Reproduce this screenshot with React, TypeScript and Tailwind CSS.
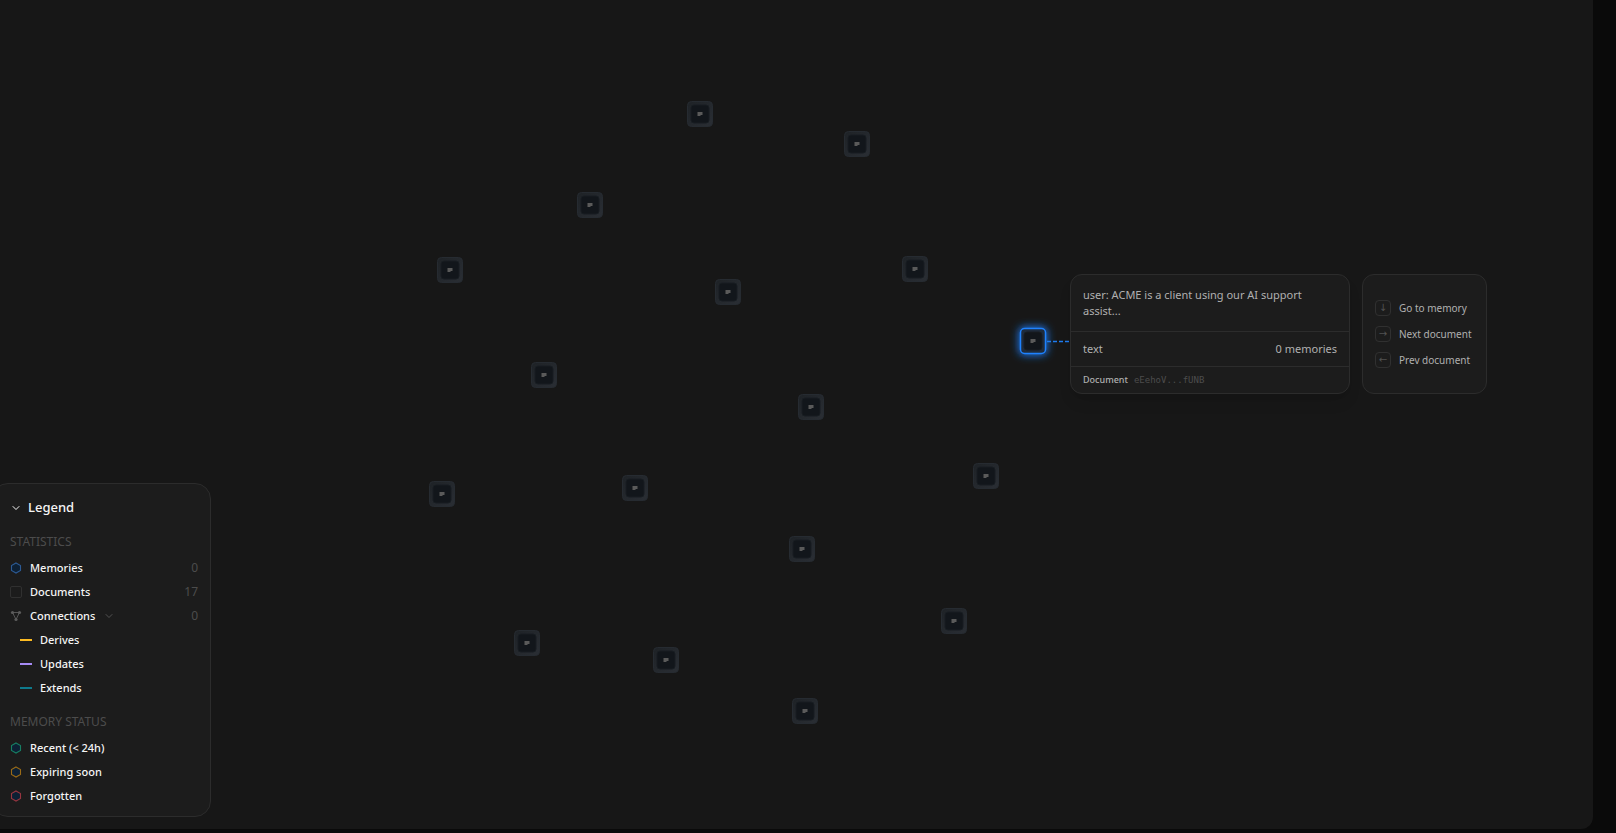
import { ChevronDown } from "lucide-react";

interface Point {
  x: number;
  y: number;
}

const documents: Point[] = [
  { x: 700, y: 114 },
  { x: 857, y: 144 },
  { x: 590, y: 205 },
  { x: 450, y: 270 },
  { x: 915, y: 269 },
  { x: 728, y: 292 },
  { x: 544, y: 375 },
  { x: 811, y: 407 },
  { x: 986, y: 476 },
  { x: 442, y: 494 },
  { x: 635, y: 488 },
  { x: 802, y: 549 },
  { x: 954, y: 621 },
  { x: 527, y: 643 },
  { x: 666, y: 660 },
  { x: 805, y: 711 },
];

const edges = [
  { label: "Derives", color: "bg-[#fdbb22]" },
  { label: "Updates", color: "bg-[#a68bf5]" },
  { label: "Extends", color: "bg-[#0e7a8c]" },
];

const statuses = [
  { label: "Recent (< 24h)", stroke: "#177e63" },
  { label: "Expiring soon", stroke: "#9a6a17" },
  { label: "Forgotten", stroke: "#963540" },
];

const shortcuts = [
  { key: "↓", label: "Go to memory" },
  { key: "→", label: "Next document" },
  { key: "←", label: "Prev document" },
];

const Hexagon = ({ stroke }: { stroke: string }) => (
  <svg width="12" height="12" viewBox="0 0 12 12" aria-hidden="true">
    <path d="M6 1L10.5 3.5V8.5L6 11L1.5 8.5V3.5Z" fill="#0d2034" stroke={stroke} strokeWidth="1.1" />
  </svg>
);

const ConnectionsIcon = () => (
  <svg width="12" height="12" viewBox="0 0 12 12" fill="#5c5c5c" stroke="#5c5c5c" aria-hidden="true">
    <path d="M2.5 2.5H9.5M2.5 2.5L6 9.5L9.5 2.5" fill="none" strokeWidth="0.9" />
    <circle cx="2.5" cy="2.5" r="1.6" stroke="none" />
    <circle cx="9.5" cy="2.5" r="1.6" stroke="none" />
    <circle cx="6" cy="9.5" r="1.6" stroke="none" />
  </svg>
);

const DocumentNode = ({ x, y, active }: Point & { active?: boolean }) => (
  <g transform={`translate(${x} ${y})`}>
    {active && (
      <rect x="-14" y="-14" width="28" height="28" rx="5" fill="#1a7cf5" filter="url(#glow)" />
    )}
    <rect
      x="-12.5"
      y="-12.5"
      width="25"
      height="25"
      rx="4"
      fill={active ? "#1e2b3c" : "url(#shell)"}
      stroke={active ? "#1f82ff" : "#262b31"}
      strokeWidth={active ? 1.5 : 1}
    />
    <rect x="-9" y="-9" width="18" height="18" rx="3" fill="#12161b" stroke="#181d22" />
    <path d="M-2.5 -2H2.5V1H0.5V2H-2.5Z" fill="#5a5a5a" />
  </g>
);

const Graph = () => (
  <svg className="absolute inset-0 size-full" role="img" aria-label="Documents">
    <defs>
      <linearGradient id="shell" x1="0" y1="0" x2="1" y2="1">
        <stop offset="0" stopColor="#1e2226" />
        <stop offset="1" stopColor="#2a2e34" />
      </linearGradient>
      <filter id="glow" x="-60%" y="-60%" width="220%" height="220%">
        <feGaussianBlur stdDeviation="4" />
      </filter>
    </defs>
    <path d="M1047 341.5H1070" stroke="#1f7cf0" strokeWidth="1.5" strokeDasharray="4 2" />
    {documents.map((doc) => (
      <DocumentNode key={`${doc.x}-${doc.y}`} {...doc} />
    ))}
    <DocumentNode x={1033} y={341} active />
  </svg>
);

const Legend = () => (
  <aside className="absolute -left-2 bottom-3 w-[219px] rounded-2xl border border-[#2c2c2c] bg-[#1c1c1c] pt-3 pr-3 pb-2 pl-[17px] text-[11px] text-[#f5f5f5]">
    <button type="button" className="flex h-6 items-center gap-1.5 text-[13px] font-medium">
      <ChevronDown size={12} />
      Legend
    </button>

    <h2 className="mt-3.5 mb-1.5 text-xs leading-4 text-[#4c4c4c] uppercase">Statistics</h2>
    <ul>
      <li className="flex h-6 items-center gap-2">
        <Hexagon stroke="#2c5a94" />
        <span className="flex-1 font-medium">Memories</span>
        <span className="text-xs text-[#4c4c4c]">0</span>
      </li>
      <li className="flex h-6 items-center gap-2">
        <span className="size-3 rounded-xs border border-[#303030]" />
        <span className="flex-1 font-medium">Documents</span>
        <span className="text-xs text-[#4c4c4c]">17</span>
      </li>
      <li className="flex h-6 items-center gap-2">
        <ConnectionsIcon />
        <button type="button" className="flex items-center gap-2 font-medium">
          Connections
          <ChevronDown size={12} className="text-[#525252]" />
        </button>
        <span className="ml-auto text-xs text-[#4c4c4c]">0</span>
      </li>
      {edges.map((edge) => (
        <li key={edge.label} className="flex h-6 items-center gap-2 pl-2.5">
          <span className={`h-0.5 w-3 ${edge.color}`} />
          <span className="font-medium">{edge.label}</span>
        </li>
      ))}
    </ul>

    <h2 className="mt-3.5 mb-1.5 text-xs leading-4 text-[#4c4c4c] uppercase">Memory status</h2>
    <ul>
      {statuses.map((status) => (
        <li key={status.label} className="flex h-6 items-center gap-2">
          <Hexagon stroke={status.stroke} />
          <span className="font-medium">{status.label}</span>
        </li>
      ))}
    </ul>
  </aside>
);

const DocumentPopover = () => (
  <div className="absolute top-[274px] left-[1070px] flex items-stretch gap-3 text-[11px] text-[#b0b0b0]">
    <article className="w-[280px] rounded-xl border border-[#2c2c2c] bg-[#1c1c1c] shadow-lg">
      <p className="border-b border-[#2c2c2c] py-3 pr-8 pl-3 leading-4">
        user: ACME is a client using our AI support assist...
      </p>
      <div className="flex justify-between border-b border-[#2c2c2c] px-3 py-2 leading-[18px]">
        <span>text</span>
        <span>0 memories</span>
      </div>
      <div className="flex h-[26px] items-center gap-1.5 px-3 text-[9px] leading-3">
        <span className="font-medium">Document</span>
        <span className="font-['DejaVu_Sans_Mono',monospace] text-[#4c4c4c]">eEehoV...fUNB</span>
      </div>
    </article>
    <ul className="flex min-w-[125px] flex-col justify-center gap-2.5 rounded-xl border border-[#2c2c2c] bg-[#1c1c1c] px-3 text-[10px] leading-4">
      {shortcuts.map((shortcut) => (
        <li key={shortcut.label} className="flex items-center gap-2">
          <kbd className="flex size-4 items-center justify-center rounded-sm border border-[#303030] font-['DejaVu_Sans',sans-serif] leading-none text-[#525252]">
            {shortcut.key}
          </kbd>
          {shortcut.label}
        </li>
      ))}
    </ul>
  </div>
);

export default function App() {
  return (
    <div className="flex h-screen overflow-hidden bg-[#0a0a0a] pr-[23px] pb-1 font-['Noto_Sans',sans-serif]">
      <main className="relative flex-1 rounded-br-xl bg-[#171717]">
        <Graph />
        <Legend />
        <DocumentPopover />
      </main>
    </div>
  );
}
